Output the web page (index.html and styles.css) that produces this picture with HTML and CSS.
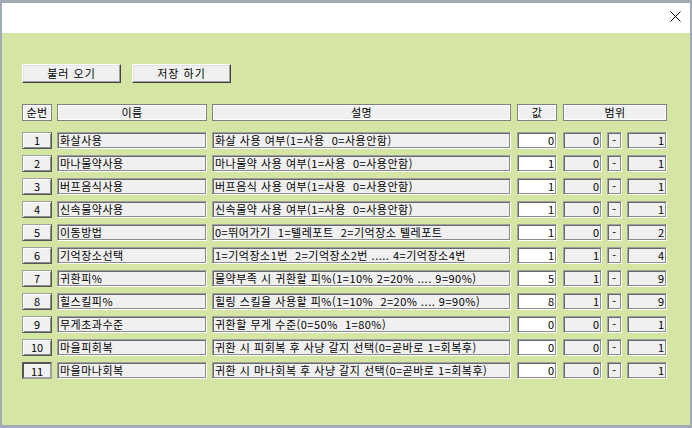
FILE: index.html
```html
<!DOCTYPE html>
<html lang="ko">
<head>
    <meta charset="UTF-8">
    <meta name="viewport" content="width=device-width, initial-scale=1.0">
    <title>설정</title>
    <link rel="stylesheet" href="styles.css">
</head>
<body>
    <div class="window">
        <div class="title-bar">
            <svg class="close-icon" width="11" height="11" viewBox="0 0 11 11">
                <path d="M0.5 0.5 L10.5 10.5 M10.5 0.5 L0.5 10.5" stroke="#000" stroke-width="1" fill="none"/>
            </svg>
        </div>

        <div class="client">
            <div class="toolbar">
                <div class="btn">불러 오기</div>
                <div class="btn">저장 하기</div>
            </div>

            <div class="row header">
                <div class="cell head col-no">순번</div>
                <div class="cell head col-name">이름</div>
                <div class="cell head col-desc">설명</div>
                <div class="cell head col-val">값</div>
                <div class="cell head col-range">범위</div>
            </div>

            <div class="rows">
                <div class="row">
                    <div class="num-btn col-no">1</div>
                    <div class="cell field col-name">화살사용</div>
                    <div class="cell field col-desc">화살 사용 여부(1=사용  0=사용안함)</div>
                    <div class="cell edit col-val">0</div>
                    <div class="cell field num col-min">0</div>
                    <div class="cell field dash col-dash">-</div>
                    <div class="cell field num col-max">1</div>
                </div>
                <div class="row">
                    <div class="num-btn col-no">2</div>
                    <div class="cell field col-name">마나물약사용</div>
                    <div class="cell field col-desc">마나물약 사용 여부(1=사용  0=사용안함)</div>
                    <div class="cell edit col-val">1</div>
                    <div class="cell field num col-min">0</div>
                    <div class="cell field dash col-dash">-</div>
                    <div class="cell field num col-max">1</div>
                </div>
                <div class="row">
                    <div class="num-btn col-no">3</div>
                    <div class="cell field col-name">버프음식사용</div>
                    <div class="cell field col-desc">버프음식 사용 여부(1=사용  0=사용안함)</div>
                    <div class="cell edit col-val">1</div>
                    <div class="cell field num col-min">0</div>
                    <div class="cell field dash col-dash">-</div>
                    <div class="cell field num col-max">1</div>
                </div>
                <div class="row">
                    <div class="num-btn col-no">4</div>
                    <div class="cell field col-name">신속물약사용</div>
                    <div class="cell field col-desc">신속물약 사용 여부(1=사용  0=사용안함)</div>
                    <div class="cell edit col-val">1</div>
                    <div class="cell field num col-min">0</div>
                    <div class="cell field dash col-dash">-</div>
                    <div class="cell field num col-max">1</div>
                </div>
                <div class="row">
                    <div class="num-btn col-no">5</div>
                    <div class="cell field col-name">이동방법</div>
                    <div class="cell field col-desc">0=뛰어가기  1=텔레포트  2=기억장소 텔레포트</div>
                    <div class="cell edit col-val">1</div>
                    <div class="cell field num col-min">0</div>
                    <div class="cell field dash col-dash">-</div>
                    <div class="cell field num col-max">2</div>
                </div>
                <div class="row">
                    <div class="num-btn col-no">6</div>
                    <div class="cell field col-name">기억장소선택</div>
                    <div class="cell field col-desc">1=기억장소1번  2=기억장소2번 ..... 4=기억장소4번</div>
                    <div class="cell edit col-val">1</div>
                    <div class="cell field num col-min">1</div>
                    <div class="cell field dash col-dash">-</div>
                    <div class="cell field num col-max">4</div>
                </div>
                <div class="row">
                    <div class="num-btn col-no">7</div>
                    <div class="cell field col-name">귀환피%</div>
                    <div class="cell field col-desc">물약부족 시 귀환할 피%(1=10% 2=20% .... 9=90%)</div>
                    <div class="cell edit col-val">5</div>
                    <div class="cell field num col-min">1</div>
                    <div class="cell field dash col-dash">-</div>
                    <div class="cell field num col-max">9</div>
                </div>
                <div class="row">
                    <div class="num-btn col-no">8</div>
                    <div class="cell field col-name">힐스킬피%</div>
                    <div class="cell field col-desc">힐링 스킬을 사용할 피%(1=10%  2=20% .... 9=90%)</div>
                    <div class="cell edit col-val">8</div>
                    <div class="cell field num col-min">1</div>
                    <div class="cell field dash col-dash">-</div>
                    <div class="cell field num col-max">9</div>
                </div>
                <div class="row">
                    <div class="num-btn col-no">9</div>
                    <div class="cell field col-name">무게초과수준</div>
                    <div class="cell field col-desc">귀환할 무게 수준(0=50%  1=80%)</div>
                    <div class="cell edit col-val">0</div>
                    <div class="cell field num col-min">0</div>
                    <div class="cell field dash col-dash">-</div>
                    <div class="cell field num col-max">1</div>
                </div>
                <div class="row">
                    <div class="num-btn col-no">10</div>
                    <div class="cell field col-name">마을피회복</div>
                    <div class="cell field col-desc">귀환 시 피회복 후 사냥 갈지 선택(0=곧바로 1=회복후)</div>
                    <div class="cell edit col-val">0</div>
                    <div class="cell field num col-min">0</div>
                    <div class="cell field dash col-dash">-</div>
                    <div class="cell field num col-max">1</div>
                </div>
                <div class="row">
                    <div class="num-btn pressed col-no">11</div>
                    <div class="cell field col-name">마을마나회복</div>
                    <div class="cell field col-desc">귀환 시 마나회복 후 사냥 갈지 선택(0=곧바로 1=회복후)</div>
                    <div class="cell edit col-val">0</div>
                    <div class="cell field num col-min">0</div>
                    <div class="cell field dash col-dash">-</div>
                    <div class="cell field num col-max">1</div>
                </div>
            </div>
        </div>
    </div>
</body>
</html>
```

FILE: styles.css
```css
body {
    margin: 0;
    font-family: "Noto Sans CJK KR", "Noto Sans", sans-serif;
    font-size: 11px;
    color: #000;
}

.window {
    width: 692px;
    height: 428px;
    box-sizing: border-box;
    border: 2px solid #a2aab7;
    border-top-width: 3px;
    border-bottom-width: 3px;
    display: flex;
    flex-direction: column;
}

.title-bar {
    height: 30px;
    flex: none;
    background-color: #fff;
    display: flex;
    justify-content: flex-end;
    align-items: flex-start;
    padding: 8px 9px 0 0;
    box-sizing: border-box;
}

.client {
    flex: 1;
    background-color: #d5e5a3; /* light olive window body */
    padding: 31px 0 0 20px;
}

.toolbar {
    display: flex;
    gap: 11px;
    margin-bottom: 21px;
}

.btn {
    width: 99px;
    height: 19px;
    box-sizing: border-box;
    background-color: #f0f0f0;
    border: 1px solid;
    border-color: #fff #404040 #404040 #fff;
    box-shadow: inset -1px -1px #a0a0a0, inset 1px 1px #e3e3e3;
    display: flex;
    align-items: center;
    justify-content: center;
    line-height: 1;
    letter-spacing: 1px;
}

.row {
    display: flex;
    height: 17px;
}

.header {
    margin-bottom: 11px;
}

.rows {
    display: flex;
    flex-direction: column;
    gap: 6px;
}

.cell, .num-btn {
    box-sizing: border-box;
    height: 100%;
    display: flex;
    align-items: center;
    white-space: pre;
    overflow: hidden;
    line-height: 1;
}

.col-no { width: 30px; margin-right: 5px; }
.col-name { width: 150px; margin-right: 5px; }
.col-desc { width: 299px; margin-right: 6px; }
.col-val { width: 40px; margin-right: 6px; }
.col-min { width: 39px; margin-right: 5px; }
.col-dash { width: 15px; margin-right: 5px; }
.col-max { width: 40px; }
.col-range { width: 104px; }

.head {
    justify-content: center;
    background-color: #f0f0f0;
    border: 1px solid #808080;
    box-shadow: inset 0 0 0 1px #fff;
    letter-spacing: 0.5px;
}

.num-btn {
    justify-content: center;
    background-color: #f0f0f0;
    border: 1px solid;
    border-color: #a0a0a0 #555 #555 #a0a0a0;
    box-shadow: inset 1px 1px #fff, inset -1px -1px #8c8c8c;
}

.num-btn.pressed {
    border: 2px solid;
    border-color: #555 #a0a0a0 #a0a0a0 #555;
    box-shadow: none;
    padding-top: 1px;
}

.field, .edit {
    background-color: #f0f0f0;
    border: 1px solid;
    border-color: #a0a0a0 #fff #fff #a0a0a0;
    box-shadow: inset 1px 1px #696969, inset -1px -1px #8c8c8c;
    padding: 0 2px;
    letter-spacing: 0.5px;
}

.edit {
    background-color: #fff;
    justify-content: flex-end;
}

.num, .edit {
    justify-content: flex-end;
    letter-spacing: 0;
}

.dash {
    justify-content: center;
    padding: 0;
}
```
